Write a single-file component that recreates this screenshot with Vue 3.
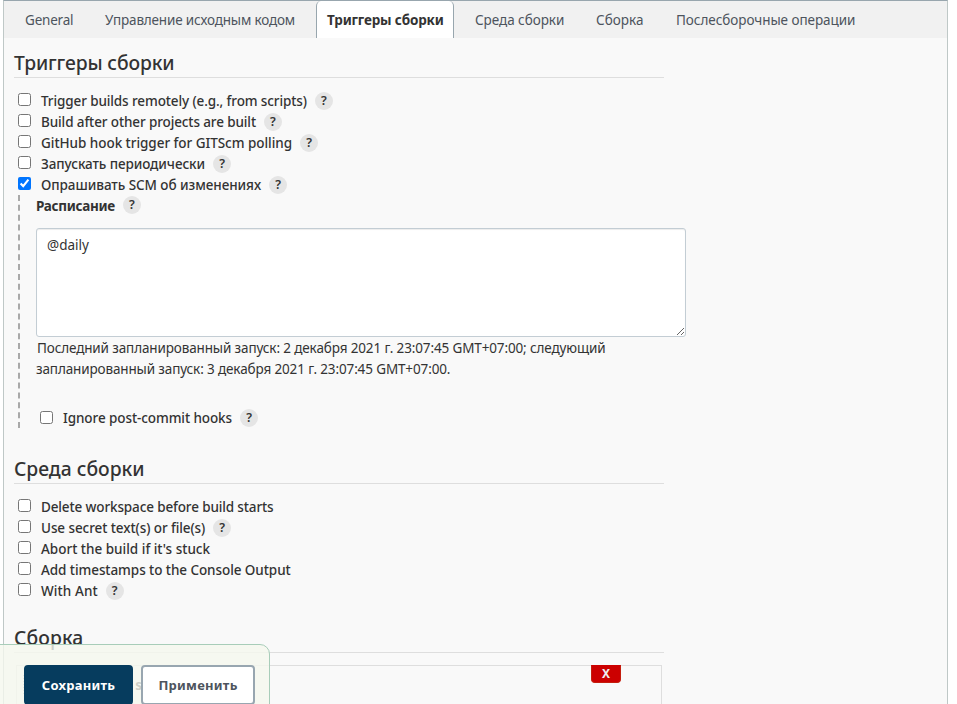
<script setup>
import { ref } from 'vue'

const tabs = [
  { text: 'General', cls: 't1', track: -0.2 },
  { text: 'Управление исходным кодом', cls: 't2', track: -0.17 },
  { text: 'Триггеры сборки', cls: 't3', track: -0.16, active: true },
  { text: 'Среда сборки', cls: 't4', track: -0.05 },
  { text: 'Сборка', cls: 't5', track: 0.02 },
  { text: 'Послесборочные операции', cls: 't6', track: -0.05 },
]
const triggers = [
  { text: 'Trigger builds remotely (e.g., from scripts)', track: -0.105, help: true },
  { text: 'Build after other projects are built', track: -0.114, help: true },
  { text: 'GitHub hook trigger for GITScm polling', track: -0.04, help: true },
  { text: 'Запускать периодически', track: -0.09, help: true },
  { text: 'Опрашивать SCM об изменениях', track: -0.06, help: true, checked: true },
]
const environment = [
  { text: 'Delete workspace before build starts', track: -0.13 },
  { text: 'Use secret text(s) or file(s)', track: -0.08, help: true },
  { text: "Abort the build if it's stuck", track: 0 },
  { text: 'Add timestamps to the Console Output', track: -0.07 },
  { text: 'With Ant', track: 0.09, help: true },
]
const schedule = ref('@daily')
const spacing = (item) => ({ letterSpacing: `${item.track}px` })
</script>

<template>
  <div class="page">
    <main class="config">
      <nav class="tabs">
        <a v-for="t in tabs" :key="t.text" class="tab" :class="[t.cls, { active: t.active }]" :style="spacing(t)">{{ t.text }}</a>
      </nav>

      <section class="section triggers">
        <h2>Триггеры сборки</h2>
        <div class="rows">
          <label v-for="r in triggers" :key="r.text" class="row">
            <input type="checkbox" :checked="r.checked" />
            <span class="caption" :style="spacing(r)">{{ r.text }}</span>
            <span v-if="r.help" class="help">?</span>
          </label>
        </div>
        <div class="nested">
          <div class="field-name"><b>Расписание</b><span class="help">?</span></div>
          <textarea v-model="schedule" spellcheck="false"></textarea>
          <p class="note">Последний запланированный запуск: 2 декабря 2021 г. 23:07:45 GMT+07:00; следующий<br />запланированный запуск: 3 декабря 2021 г. 23:07:45 GMT+07:00.</p>
          <label class="row hooks">
            <input type="checkbox" />
            <span class="caption">Ignore post-commit hooks</span>
            <span class="help">?</span>
          </label>
        </div>
      </section>

      <section class="section env">
        <h2>Среда сборки</h2>
        <div class="rows">
          <label v-for="r in environment" :key="r.text" class="row">
            <input type="checkbox" />
            <span class="caption" :style="spacing(r)">{{ r.text }}</span>
            <span v-if="r.help" class="help">?</span>
          </label>
        </div>
      </section>

      <section class="section build">
        <h2>Сборка</h2>
        <div class="step">
          <span class="grip"></span>
          <b class="step-name">s</b>
          <button class="remove">X</button>
        </div>
      </section>
    </main>

    <footer class="actions">
      <button class="save">Сохранить</button>
      <button class="apply">Применить</button>
    </footer>
  </div>
</template>

<style>
body {
  background: #fff;
  overflow: hidden;
}
</style>

<style scoped>
.page {
  position: relative;
  height: 704px;
  overflow: hidden;
  font-family: "Noto Sans", "Open Sans", sans-serif;
  font-size: 13.5px;
  line-height: 21px;
  color: #333;
}
.config {
  box-sizing: border-box;
  width: 945px;
  height: 720px;
  margin-left: 3px;
  background: #f9f9f9;
  border: 1px solid #bfc8c7;
  border-top-color: #98a6ae;
}
.tabs {
  display: flex;
  height: 37px;
  background: #f1f1f1;
}
.tab {
  box-sizing: border-box;
  height: 37px;
  padding: 9px 0 0 21px;
  color: #4d545d;
  white-space: nowrap;
}
.t1 { width: 80px; }
.t2 { width: 232px; }
.t3 { width: 138px; }
.t4 { width: 121px; }
.t5 { width: 80px; }
.tab.active {
  padding-left: 10px;
  background: #fff;
  border: 1px solid #98a6ae;
  border-bottom: 0;
  border-top: 0;
  border-radius: 5px 5px 0 0;
  font-weight: 700;
  color: #333;
}
.section {
  width: 650px;
  padding: 11px 0 0 10px;
}
h2 {
  box-sizing: border-box;
  height: 29px;
  margin: 0;
  border-bottom: 1px solid #dedede;
  font-size: 19.3px;
  line-height: 28px;
  font-weight: 500;
}
.triggers h2 {
  letter-spacing: -0.12px;
}
.build h2 {
  letter-spacing: 0.1px;
}
.rows {
  padding-top: 12px;
}
.row {
  display: flex;
  align-items: center;
  height: 21px;
  padding-left: 4px;
}
.row input {
  width: 13px;
  height: 13px;
  margin: 0 10px 2px 0;
  flex: none;
}
.caption {
  padding-top: 2px;
  font-weight: 500;
  white-space: nowrap;
}
.help {
  width: 18px;
  height: 18px;
  margin-left: 8px;
  border-radius: 50%;
  background: #e5e5e5;
  font-size: 12.5px;
  line-height: 18px;
  font-weight: 600;
  text-align: center;
}
.nested {
  box-sizing: border-box;
  height: 233px;
  margin-left: 4px;
  padding-left: 16px;
  border-left: 2px dashed #a9a9a9;
}
.field-name {
  display: flex;
  align-items: center;
  height: 21px;
}
.field-name b {
  padding-top: 2px;
  letter-spacing: -0.31px;
}
.field-name .help {
  margin-bottom: 1px;
}
textarea {
  display: block;
  box-sizing: border-box;
  width: 650px;
  height: 109px;
  margin: 12px 0 0;
  padding: 6px 10px;
  border: 1px solid #c3cdd4;
  border-radius: 3px;
  background: #fff;
  box-shadow: inset 0 1px 1px rgba(0, 0, 0, 0.075);
  color: #333;
  font: inherit;
}
.note {
  margin: 1px 0 0;
  text-indent: 1px;
  letter-spacing: -0.13px;
  white-space: nowrap;
}
.hooks {
  margin-top: 28px;
}
.hooks .caption {
  padding-top: 0;
  letter-spacing: -0.085px;
}
.hooks .help {
  margin-bottom: 1px;
}
.env {
  padding-top: 27px;
}
.build {
  padding-top: 23px;
}
.step {
  display: flex;
  box-sizing: border-box;
  width: 646px;
  height: 80px;
  margin: 12px 0 0 2px;
  padding-left: 6px;
  border: 1px solid #dedede;
}
.grip {
  width: 3px;
  height: 20px;
  margin-top: 9px;
  background: repeating-linear-gradient(#aaa 0 1px, transparent 1px 3px);
}
.step-name {
  width: 116px;
  margin-top: 9px;
  text-align: right;
}
.remove {
  width: 30px;
  height: 18px;
  margin: -1px 0 0 449px;
  padding: 0;
  border: 1px solid #c41e0e;
  border-top-color: #c00;
  border-radius: 0 0 4px 4px;
  background: #c00;
  color: #eee;
  font: 700 12px/16px "Noto Sans", sans-serif;
}
.actions {
  position: absolute;
  left: -10px;
  top: 644px;
  box-sizing: border-box;
  display: flex;
  gap: 8px;
  width: 280px;
  height: 80px;
  padding: 20px 0 0 33px;
  border: 1px solid #a8cdb9;
  border-radius: 10px;
  background: rgba(245, 248, 237, 0.8);
}
.actions button {
  box-sizing: border-box;
  height: 40px;
  padding: 0;
  border-radius: 4px;
  font: 700 13px/20px "Noto Sans", sans-serif;
  letter-spacing: 0.25px;
}
.save {
  width: 109px;
  border: 2px solid #063c5e;
  background: #063c5e;
  color: #fff;
}
.apply {
  width: 114px;
  border: 2px solid #98a6b0;
  background: #fff;
  color: #4d545d;
}
</style>
